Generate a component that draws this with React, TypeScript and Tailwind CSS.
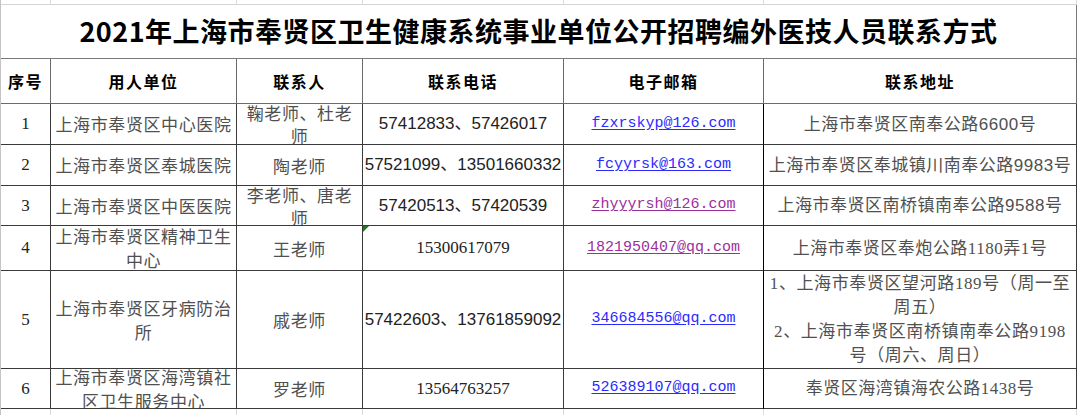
import React from "react";

const COLS = "grid grid-cols-[50px_186px_126px_201px_200px_313px]";
const CJK = { fontFamily: '"Noto Sans CJK SC", sans-serif' };
const SANS = { fontFamily: '"Liberation Sans", "Noto Sans CJK SC", sans-serif' };
const SERIF = { fontFamily: '"Liberation Serif", "Noto Sans CJK SC", serif' };
const MONO = { fontFamily: '"Liberation Mono", "DejaVu Sans Mono", monospace' };

type Row = {
  no: string;
  unit: string[];
  contact: string[];
  phone: string;
  phoneSerif?: boolean;
  email: string;
  visited?: boolean;
  addr: string[];
  addrSerif?: boolean;
  h: string;
  flag?: boolean;
};

const rows: Row[] = [
  {
    no: "1",
    unit: ["上海市奉贤区中心医院"],
    contact: ["鞠老师、杜老", "师"],
    phone: "57412833、57426017",
    email: "fzxrskyp@126.com",
    addr: ["上海市奉贤区南奉公路6600号"],
    h: "h-[41px]",
  },
  {
    no: "2",
    unit: ["上海市奉贤区奉城医院"],
    contact: ["陶老师"],
    phone: "57521099、13501660332",
    email: "fcyyrsk@163.com",
    addr: ["上海市奉贤区奉城镇川南奉公路9983号"],
    h: "h-[41px]",
  },
  {
    no: "3",
    unit: ["上海市奉贤区中医医院"],
    contact: ["李老师、唐老", "师"],
    phone: "57420513、57420539",
    email: "zhyyyrsh@126.com",
    visited: true,
    addr: ["上海市奉贤区南桥镇南奉公路9588号"],
    h: "h-[40px]",
  },
  {
    no: "4",
    unit: ["上海市奉贤区精神卫生", "中心"],
    contact: ["王老师"],
    phone: "15300617079",
    phoneSerif: true,
    email: "1821950407@qq.com",
    visited: true,
    addr: ["上海市奉贤区奉炮公路1180弄1号"],
    addrSerif: true,
    h: "h-[45px]",
    flag: true,
  },
  {
    no: "5",
    unit: ["上海市奉贤区牙病防治", "所"],
    contact: ["戚老师"],
    phone: "57422603、13761859092",
    email: "346684556@qq.com",
    addr: ["1、上海市奉贤区望河路189号（周一至", "周五）", "2、上海市奉贤区南桥镇南奉公路9198", "号（周六、周日）"],
    addrSerif: true,
    h: "h-[98px]",
  },
  {
    no: "6",
    unit: ["上海市奉贤区海湾镇社", "区卫生服务中心"],
    contact: ["罗老师"],
    phone: "13564763257",
    phoneSerif: true,
    email: "526389107@qq.com",
    addr: ["奉贤区海湾镇海农公路1438号"],
    addrSerif: true,
    h: "h-[40px]",
  },
];

function Lines({ lines, style, className }: { lines: string[]; style: React.CSSProperties; className?: string }) {
  return (
    <div className={"text-center text-[17px] text-[#505050] " + (className ?? "leading-[23px]")} style={style}>
      {lines.map((l, i) => (
        <div key={i} className="whitespace-nowrap">
          {l}
        </div>
      ))}
    </div>
  );
}

function Cell({ children, line = "border-[#3a3a3a]", extra = "" }: { children?: React.ReactNode; line?: string; extra?: string }) {
  return (
    <div className={"relative flex items-center justify-center overflow-hidden border-r border-b " + line + " " + extra}>
      {children}
    </div>
  );
}

function FaintStrip({ h }: { h: string }) {
  return (
    <div className={COLS + " " + h}>
      <div className="border-r border-[#dcdcdc]" />
      <div className="border-r border-[#dcdcdc]" />
      <div className="border-r border-[#dcdcdc]" />
      <div className="border-r border-[#dcdcdc]" />
      <div className="border-r border-[#dcdcdc]" />
      <div className="border-r border-[#dcdcdc]" />
    </div>
  );
}

export default function App() {
  return (
    <div className="w-[1080px] h-[415px] overflow-hidden bg-white">
      <div className="w-[1077px] border-l border-[#c4c4c4]">
        {/* 上方网格 */}
        <div className="border-b border-[#d4d4d4]">
          <FaintStrip h="h-[4px]" />
        </div>

        {/* 标题 */}
        <div className="h-[54px] flex items-center justify-center border-r border-b border-[#7a7a7a]">
          <h1 className="text-[27px] font-bold text-black tracking-[0.5px]" style={CJK}>
            2021年上海市奉贤区卫生健康系统事业单位公开招聘编外医技人员联系方式
          </h1>
        </div>

        {/* 表头 */}
        <div className={COLS + " h-[45px] text-[16px] font-bold text-black tracking-[1.5px]"} style={CJK}>
          <Cell line="border-[#6a6a6a]">序号</Cell>
          <Cell line="border-[#6a6a6a]">用人单位</Cell>
          <Cell line="border-[#6a6a6a]">联系人</Cell>
          <Cell line="border-[#6a6a6a]">联系电话</Cell>
          <Cell line="border-[#6a6a6a]">电子邮箱</Cell>
          <Cell line="border-[#6a6a6a]">联系地址</Cell>
        </div>

        {/* 数据行 */}
        {rows.map((r) => (
          <div key={r.no} className={COLS + " " + r.h}>
            <Cell>
              <span className="text-[17px] text-[#222]" style={SERIF}>
                {r.no}
              </span>
            </Cell>
            <Cell>
              <Lines lines={r.unit} style={CJK} className="leading-[24px] tracking-[0.6px]" />
            </Cell>
            <Cell>
              <Lines lines={r.contact} style={CJK} className="leading-[23px] tracking-[0.6px]" />
            </Cell>
            <Cell>
              {r.flag && (
                <div className="absolute left-0 top-0 w-0 h-0 border-t-[6px] border-r-[6px] border-t-[#1f7a1f] border-r-transparent" />
              )}
              <span className="text-[17px] text-[#222] whitespace-nowrap" style={r.phoneSerif ? SERIF : SANS}>
                {r.phone}
              </span>
            </Cell>
            <Cell line="border-[#3a3a3a] border-r-black">
              <span
                className={
                  "text-[15px] underline underline-offset-2 whitespace-nowrap " +
                  (r.visited ? "text-[#9b2f9b]" : "text-[#2a2aff]")
                }
                style={MONO}
              >
                {r.email}
              </span>
            </Cell>
            <Cell>
              <Lines
                lines={r.addr}
                style={r.addrSerif ? SERIF : SANS}
                className={
                  r.addr.length > 1 ? "leading-[24px] tracking-[0.6px]" : "leading-[23px] tracking-[0.5px]"
                }
              />
            </Cell>
          </div>
        ))}

        {/* 下方网格 */}
        <FaintStrip h="h-[6px]" />
      </div>
    </div>
  );
}
